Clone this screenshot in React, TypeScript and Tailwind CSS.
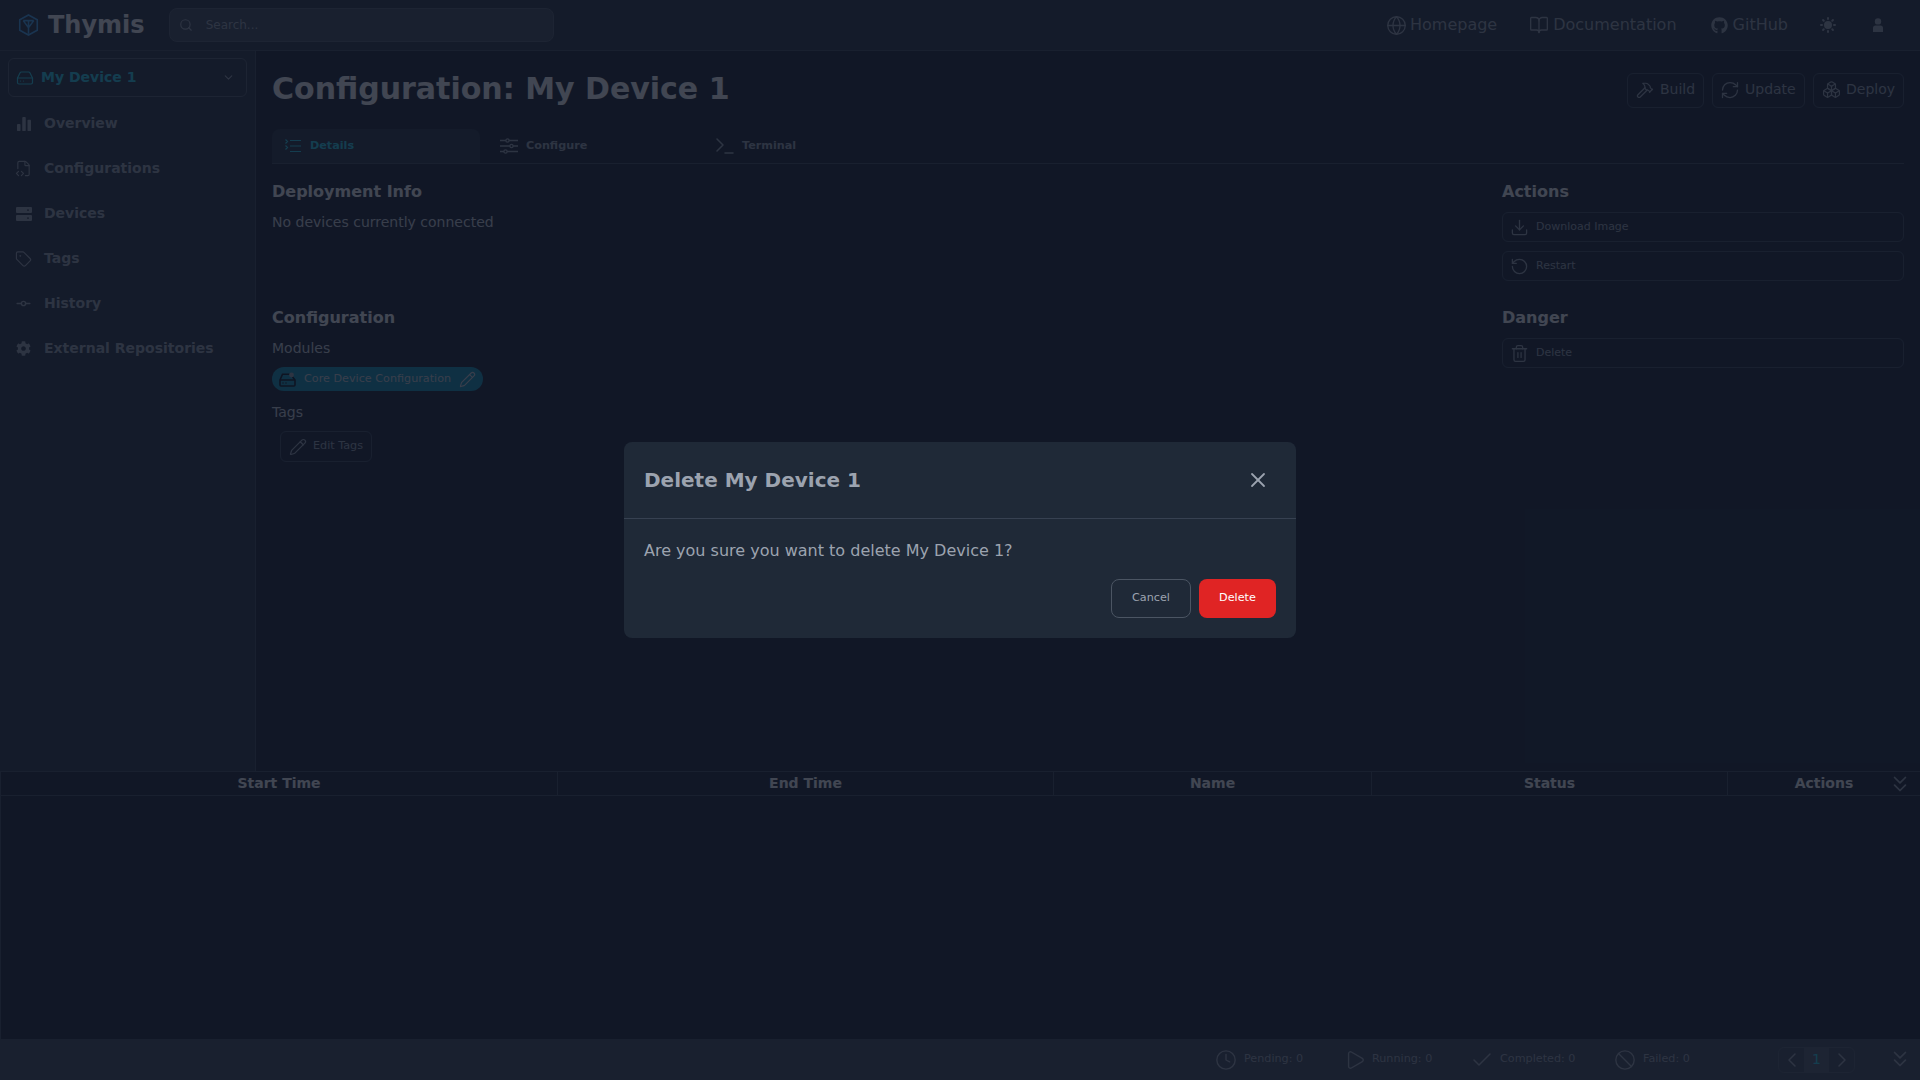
import type { FC, ReactNode } from 'react';
import {
  Ban, BookOpen, Boxes, Check, ChevronDown, ChevronLeft, ChevronRight, ChevronsDown, Clock,
  Download, FileCode2, GitCommitHorizontal, Globe, Hammer, HardDrive, Pencil, Play, RefreshCw,
  RotateCcw, Search, Tag, Terminal, Trash2, X,
} from 'lucide-react';
import { FaCog, FaGithub } from 'react-icons/fa';
import { HiSun } from 'react-icons/hi';

const Logo: FC = () => (
  <svg viewBox="0 0 24 26" className="w-[21px] h-[24px] text-[#3ba5f5]" fill="none" stroke="currentColor" strokeWidth="1.8">
    <path d="M12 1.5 22 7v12l-10 5.5L2 19V7z" />
    <path d="M6 8h12M12 8v15M6 8l6 8 6-8" />
  </svg>
);

const BarsIcon: FC = () => (
  <svg viewBox="0 0 16 16" className="w-[14px] h-[14px]" fill="currentColor">
    <rect x="0" y="8" width="4" height="8" rx="1" />
    <rect x="6" y="0" width="4" height="16" rx="1" />
    <rect x="12" y="3" width="4" height="13" rx="1" />
  </svg>
);

const ServerIcon: FC = () => (
  <svg viewBox="0 0 16 14" className="w-4 h-[14px]" fill="currentColor">
    <path fillRule="evenodd" d="M1 0h14a1 1 0 0 1 1 1v4a1 1 0 0 1-1 1H1a1 1 0 0 1-1-1V1a1 1 0 0 1 1-1zm11 2.2a.9.9 0 1 0 0 1.8.9.9 0 0 0 0-1.8zM1 8h14a1 1 0 0 1 1 1v4a1 1 0 0 1-1 1H1a1 1 0 0 1-1-1V9a1 1 0 0 1 1-1zm11 2.2a.9.9 0 1 0 0 1.8.9.9 0 0 0 0-1.8z" />
  </svg>
);

const ListIcon: FC = () => (
  <svg viewBox="0 0 16 14" className="w-4 h-[14px]" fill="none" stroke="currentColor" strokeWidth="1.2">
    <path d="M5 1.5h11M5 7h11M5 12.5h11M.5 .5l2 2-2 2M.5 6.5l2 2-2 2" />
  </svg>
);

const SlidersIcon: FC = () => (
  <svg viewBox="0 0 18 16" className="w-[18px] h-4" fill="none" stroke="currentColor" strokeWidth="1.3">
    <path d="M0 2.5h6M9 2.5h9M0 8h10M13 8h5M0 13.5h4M7 13.5h11" />
    <circle cx="7.5" cy="2.5" r="1.6" />
    <circle cx="11.5" cy="8" r="1.6" />
    <circle cx="5.5" cy="13.5" r="1.6" />
  </svg>
);

const UserIcon: FC = () => (
  <svg viewBox="0 0 10 14" className="w-[10px] h-[14px]" fill="currentColor">
    <circle cx="5" cy="3.4" r="3.2" />
    <path d="M2.5 7.6h5A2.5 2.5 0 0 1 10 10.1V14H0v-3.9a2.5 2.5 0 0 1 2.5-2.5z" />
  </svg>
);

// drive with a small badge, module icon in the pill
const ModuleIcon: FC = () => (
  <svg viewBox="0 0 17 15" className="w-[17px] h-[15px] text-[#030712]" fill="none" stroke="currentColor" strokeWidth="1.6">
    <path d="M1 8 3.5 2.2h8L16 8v5a1 1 0 0 1-1 1H2a1 1 0 0 1-1-1z" />
    <path d="M1 8h15M3.5 11h1M6.5 11h1" />
    <circle cx="12.5" cy="3" r="2.4" fill="#9ca3af" stroke="none" />
  </svg>
);

const NavItem: FC<{ icon: ReactNode; label: string }> = ({ icon, label }) => (
  <div className="h-[45px] flex items-center gap-[12px] pl-[15px] text-[14px] font-bold text-[#9ca3af]">
    <span className="w-[17px] flex justify-center">{icon}</span>
    {label}
  </div>
);

const ActionButton: FC<{ icon: ReactNode; label: string; width: string }> = ({ icon, label, width }) => (
  <button className={`h-[35px] ${width} flex items-center gap-[5px] pl-[7px] pb-[1px] rounded-md border border-[#374151] text-[14px] text-[#9ca3af]`}>
    <span className="w-[20px] flex justify-center">{icon}</span>
    {label}
  </button>
);

const TabItem: FC<{ icon: ReactNode; label: string; active?: boolean }> = ({ icon, label, active }) => (
  <div className={`w-[208px] h-full flex items-center gap-[5px] pl-[9px] text-[11.2px] font-bold rounded-t-lg ${active ? 'bg-[#1f2937] text-[#22d3ee]' : 'text-[#9ca3af]'}`}>
    <span className="w-[24px] flex justify-center">{icon}</span>
    {label}
  </div>
);

const WideButton: FC<{ icon: ReactNode; label: string }> = ({ icon, label }) => (
  <button className="w-full h-[30px] flex items-center gap-[7px] pl-[7px] rounded-md border border-[#374151] text-[11px] text-[#9ca3af]">
    {icon}
    {label}
  </button>
);

const StatusItem: FC<{ icon: ReactNode; label: string; width: string; gap: string }> = ({ icon, label, width, gap }) => (
  <div className={`${width} ${gap} flex items-center text-[11.2px] text-[#9ca3af]`}>
    {icon}
    {label}
  </div>
);

const headers = [
  { label: 'Start Time', width: 'w-[557px]' },
  { label: 'End Time', width: 'w-[496px]' },
  { label: 'Name', width: 'w-[318px]' },
  { label: 'Status', width: 'w-[356px]' },
];

export default function App() {
  return (
    <div className="relative h-screen w-full overflow-hidden flex flex-col bg-[#111827] text-white font-['DejaVu_Sans',sans-serif]">
      <header className="h-[51px] shrink-0 flex items-center border-b border-[#374151] bg-[#1f2937] pl-[18px] pr-[37px]">
        <Logo />
        <span className="ml-[9px] text-[24px] font-bold">Thymis</span>
        <div className="ml-[24px] w-[385px] h-[34px] flex items-center gap-[13px] pl-[9px] rounded-lg border border-[#4b5563] bg-[#374151] text-[12px] text-[#9ca3af]">
          <Search size={14} />
          Search...
        </div>
        <div className="ml-auto flex items-center text-[16px] text-[#9ca3af]">
          <Globe size={21} strokeWidth={1.5} />
          <span className="ml-[3px]">Homepage</span>
          <BookOpen size={20} strokeWidth={1.6} className="ml-[32px]" />
          <span className="ml-[4px]">Documentation</span>
          <FaGithub size={17} className="ml-[34px]" />
          <span className="ml-[5px]">GitHub</span>
          <HiSun size={20} className="ml-[30px]" />
          <span className="ml-[35px]"><UserIcon /></span>
        </div>
      </header>

      <div className="flex-1 min-h-0 flex">
        <aside className="w-[256px] shrink-0 border-r border-[#374151] bg-[#1f2937] pt-[7px]">
          <div className="mx-[8px] w-[239px] h-[39px] flex items-center gap-[7px] pl-[7px] pr-[11px] rounded-md border border-[#4b5563] text-[14px] font-bold text-[#22d3ee]">
            <HardDrive size={18} strokeWidth={1.6} />
            My Device 1
            <ChevronDown size={13} className="ml-auto text-[#9ca3af]" />
          </div>
          <nav className="mt-[4px]">
            <NavItem icon={<BarsIcon />} label="Overview" />
            <NavItem icon={<FileCode2 size={17} strokeWidth={1.6} />} label="Configurations" />
            <NavItem icon={<ServerIcon />} label="Devices" />
            <NavItem icon={<Tag size={18} strokeWidth={1.6} />} label="Tags" />
            <NavItem icon={<GitCommitHorizontal size={19} />} label="History" />
            <NavItem icon={<FaCog size={15} />} label="External Repositories" />
          </nav>
        </aside>

        <main className="flex-1 min-w-0 px-[16px]">
          <div className="h-[78px] flex items-center justify-between">
            <h1 className="pb-[3px] text-[30px] font-bold leading-none">Configuration: My Device 1</h1>
            <div className="flex gap-[8px]">
              <ActionButton icon={<Hammer size={18} strokeWidth={1.6} />} label="Build" width="w-[77px]" />
              <ActionButton icon={<RefreshCw size={20} strokeWidth={1.5} />} label="Update" width="w-[93px]" />
              <ActionButton icon={<Boxes size={19} strokeWidth={1.5} />} label="Deploy" width="w-[91px]" />
            </div>
          </div>
          <div className="h-[35px] flex gap-[8px] border-b border-[#374151]">
            <TabItem active icon={<ListIcon />} label="Details" />
            <TabItem icon={<SlidersIcon />} label="Configure" />
            <TabItem icon={<Terminal size={24} strokeWidth={1.5} />} label="Terminal" />
          </div>
          <div className="flex justify-between pt-[16px]">
            <div>
              <h2 className="text-[16px] font-bold leading-[24px]">Deployment Info</h2>
              <p className="mt-[8px] text-[14px] leading-[21px] text-[#d1d5db]">No devices currently connected</p>
              <h2 className="mt-[73px] text-[16px] font-bold leading-[24px]">Configuration</h2>
              <p className="mt-[8px] text-[14px] leading-[21px] text-[#d1d5db]">Modules</p>
              <div className="mt-[8px] w-[211px] h-[24px] flex items-center pl-[7px] rounded-full bg-[#0891b2] text-[11.2px] text-[#d1d5db]">
                <ModuleIcon />
                <span className="ml-[8px]">Core Device Configuration</span>
                <Pencil size={17} strokeWidth={1.6} className="ml-[8px]" />
              </div>
              <p className="mt-[11px] text-[14px] leading-[21px] text-[#d1d5db]">Tags</p>
              <button className="ml-[8px] mt-[8px] w-[92px] h-[31px] flex items-center gap-[6px] pl-[8px] rounded-md border border-[#374151] text-[11.2px] text-[#9ca3af]">
                <Pencil size={18} strokeWidth={1.6} />
                Edit Tags
              </button>
            </div>
            <div className="w-[402px]">
              <h2 className="text-[16px] font-bold leading-[24px]">Actions</h2>
              <div className="mt-[8px] flex flex-col gap-[9px]">
                <WideButton icon={<Download size={19} strokeWidth={1.6} />} label="Download Image" />
                <WideButton icon={<RotateCcw size={19} strokeWidth={1.6} />} label="Restart" />
              </div>
              <h2 className="mt-[25px] text-[16px] font-bold leading-[24px]">Danger</h2>
              <div className="mt-[8px]">
                <WideButton icon={<Trash2 size={19} strokeWidth={1.6} />} label="Delete" />
              </div>
            </div>
          </div>
        </main>
      </div>

      <section className="h-[309px] shrink-0 flex flex-col border-t border-[#374151]">
        <div className="h-[24px] flex border-b border-l border-[#374151] text-[14px] font-bold">
          {headers.map(h => (
            <div key={h.label} className={`${h.width} flex items-center justify-center border-r border-[#374151]`}>{h.label}</div>
          ))}
          <div className="relative flex-1 flex items-center justify-center">
            Actions
            <ChevronsDown size={26} strokeWidth={1.6} className="absolute right-[7px] text-[#9ca3af]" />
          </div>
        </div>
        <div className="flex-1 border-l border-[#374151]" />
        <div className="h-[41px] flex items-center bg-[#374151] pl-[1215px] pr-[7px]">
          <StatusItem width="w-[129px]" gap="gap-[7px]" icon={<Clock size={22} strokeWidth={1.5} />} label="Pending: 0" />
          <StatusItem width="w-[126px]" gap="gap-[6px]" icon={<Play size={22} strokeWidth={1.5} />} label="Running: 0" />
          <StatusItem width="w-[144px]" gap="gap-[6px]" icon={<Check size={24} strokeWidth={1.5} />} label="Completed: 0" />
          <StatusItem width="w-[164px]" gap="gap-[7px]" icon={<Ban size={22} strokeWidth={1.5} />} label="Failed: 0" />
          <div className="w-[77px] h-[26px] flex rounded-md border border-[#4b5563] text-[#9ca3af]">
            <span className="flex-1 flex items-center justify-center"><ChevronLeft size={24} strokeWidth={1.5} /></span>
            <span className="w-[25px] flex items-center justify-center bg-[#4b5563] text-[14px] text-[#22d3ee]">1</span>
            <span className="flex-1 flex items-center justify-center"><ChevronRight size={24} strokeWidth={1.5} /></span>
          </div>
          <ChevronsDown size={26} strokeWidth={1.6} className="ml-auto mb-[2px] text-[#9ca3af]" />
        </div>
      </section>

      {/* backdrop and dialog */}
      <div className="absolute inset-0 bg-[#111827]/80" />
      <div className="absolute left-[624px] top-[442px] w-[672px] h-[196px] rounded-lg bg-[#1f2937] flex flex-col">
        <div className="h-[77px] flex items-center justify-between border-b border-[#374151] pl-[20px] pr-[26px]">
          <h3 className="text-[20px] font-bold text-[#9ca3af]">Delete My Device 1</h3>
          <X size={24} strokeWidth={1.8} className="text-[#9ca3af]" />
        </div>
        <div className="px-[20px] pt-[20px]">
          <p className="text-[16px] leading-[24px] text-[#9ca3af]">Are you sure you want to delete My Device 1?</p>
          <div className="mt-[16px] flex justify-end gap-[8px]">
            <button className="w-[80px] h-[39px] pb-[1px] rounded-lg border border-[#4b5563] text-[11.2px] text-[#9ca3af]">Cancel</button>
            <button className="w-[77px] h-[39px] pb-[1px] rounded-lg bg-[#e02424] text-[11.2px] text-white">Delete</button>
          </div>
        </div>
      </div>
    </div>
  );
}
